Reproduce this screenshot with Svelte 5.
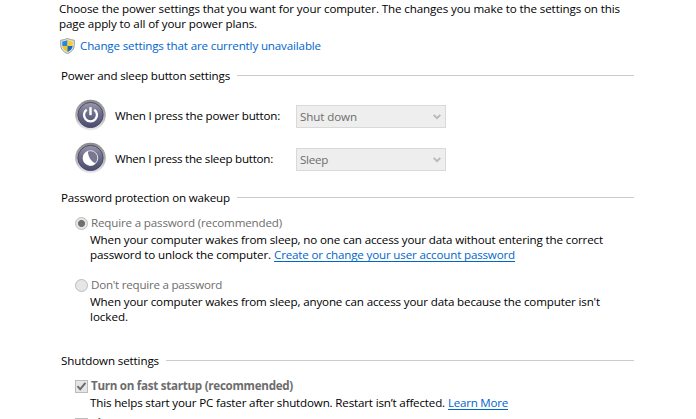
<script>
  // Spreads the letters of a run so that it fills the given width.
  function fit(node, width) {
    const natural = node.getBoundingClientRect().width;
    const count = node.textContent.length;
    node.style.letterSpacing = `${(width - natural) / count}px`;
  }

  const buttons = [
    { kind: 'power', label: 'When I press the power button:', width: 165, value: 'Shut down', valueWidth: 57 },
    { kind: 'sleep', label: 'When I press the sleep button:', width: 158, value: 'Sleep', valueWidth: 28 }
  ];
</script>

{#snippet heading(text, width)}
  <div class="heading">
    <h2><span use:fit={width}>{text}</span></h2>
    <i></i>
  </div>
{/snippet}

<main>
  <div class="intro">
    <p><span use:fit={561}>Choose the power settings that you want for your computer. The changes you make to the settings on this</span></p>
    <p><span use:fit={198}>page apply to all of your power plans.</span></p>
  </div>

  <div class="unlock">
    <svg width="15" height="16" viewBox="0 0 15 16">
      <path d="M7.5 .4Q10.5 2 14.3 2.2V7.5Q14.1 12.8 7.5 15.7Q.9 12.8 .7 7.5V2.2Q4.5 2 7.5 .4Z" fill="#dfe3e4" stroke="#8e9597" stroke-width=".9" />
      <path d="M7.5 2Q5.3 3.2 2.3 3.5V8H7.5Z" fill="#2687dc" />
      <path d="M7.5 2Q9.8 3.2 12.7 3.5V8H7.5Z" fill="#f8ce35" />
      <path d="M2.3 8H7.5V14Q2.8 11.8 2.3 8Z" fill="#f5c51f" />
      <path d="M12.7 8H7.5V14Q12.2 11.8 12.7 8Z" fill="#1767bd" />
    </svg>
    <a href="#unlock"><span use:fit={241}>Change settings that are currently unavailable</span></a>
  </div>

  <section class="buttons">
    {@render heading('Power and sleep button settings', 169)}
    {#each buttons as b}
      <div class="action">
        <svg class="orb" width="32" height="32" viewBox="0 0 32 32">
          <defs>
            <linearGradient id="rim-{b.kind}" x1="0" y1="0" x2="0" y2="1">
              <stop offset="0" stop-color="#8b8b8b" />
              <stop offset=".5" stop-color="#acacae" />
              <stop offset="1" stop-color="#ececef" />
            </linearGradient>
            <linearGradient id="face-{b.kind}" x1="0" y1="0" x2="0" y2="1">
              <stop offset="0" stop-color="#9797ab" />
              <stop offset=".5" stop-color="#696988" />
              <stop offset="1" stop-color="#4b4b70" />
            </linearGradient>
          </defs>
          <circle cx="15.5" cy="16" r="15.3" fill="url(#rim-{b.kind})" />
          <circle cx="15.5" cy="16" r="12.6" fill="url(#face-{b.kind})" stroke="#4c4c6b" stroke-width="1" />
          {#if b.kind === 'power'}
            <path d="M11.7 10.6A6.5 6.5 0 1 0 19.3 10.6" fill="none" stroke="#fff" stroke-width="2.3" />
            <path d="M15.5 8.2V16.2" stroke="#fff" stroke-width="2.4" />
          {:else}
            <circle cx="15.5" cy="16" r="7.3" fill="#77778f" stroke="#e2e2e9" stroke-width="1" />
            <path d="M13 9C12.7 14 16 19.6 20.6 21.4A7.5 7.5 0 1 1 13 9Z" fill="#fff" />
          {/if}
        </svg>
        <div class="label"><span use:fit={b.width}>{b.label}</span></div>
        <div class="select">
          <span use:fit={b.valueWidth}>{b.value}</span>
          <svg width="8" height="6" viewBox="0 0 8 6"><path d="M.7 .8L4 4.1L7.3 .8" fill="none" stroke="#b8b8b8" stroke-width="1.9" /></svg>
        </div>
      </div>
    {/each}
  </section>

  <section class="password">
    {@render heading('Password protection on wakeup', 169)}
    <div class="option">
      <b class="radio on"></b>
      <span use:fit={191}>Require a password (recommended)</span>
    </div>
    <div class="description">
      <p><span use:fit={513}>When your computer wakes from sleep, no one can access your data without entering the correct</span></p>
      <p><span use:fit={181}>password to unlock the computer.</span><a class="underlined" href="#account"><span use:fit={241}>Create or change your user account password</span></a></p>
    </div>
    <div class="option second">
      <b class="radio"></b>
      <span use:fit={131}>Don't require a password</span>
    </div>
    <div class="description">
      <p><span use:fit={510}>When your computer wakes from sleep, anyone can access your data because the computer isn't</span></p>
      <p><span use:fit={38}>locked.</span></p>
    </div>
  </section>

  <section class="shutdown">
    {@render heading('Shutdown settings', 98)}
    <div class="option strong">
      <b class="check"><svg width="11" height="11" viewBox="0 0 11 11"><path d="M1.5 5.2L4.2 8.2L9.4 1.9" fill="none" stroke="#6b6b6b" stroke-width="1.9" /></svg></b>
      <span use:fit={202}>Turn on fast startup (recommended)</span>
    </div>
    <div class="description">
      <p><span use:fit={355}>This helps start your PC faster after shutdown. Restart isn’t affected.</span><a class="underlined" href="#more"><span use:fit={60}>Learn More</span></a></p>
    </div>
    <div class="option strong last">
      <b class="check"></b>
      <span use:fit={32}>Sleep</span>
    </div>
  </section>
</main>

<style>
  :global(body) {
    background: #fff;
    overflow: hidden;
  }

  main {
    box-sizing: border-box;
    width: 696px;
    height: 419px;
    overflow: hidden;
    padding: 1px 62px 0 59px;
    background: #fff;
    color: #000;
    font: 11.6px/15px 'Open Sans', 'Noto Sans', sans-serif;
    white-space: nowrap;
  }

  p,
  h2 {
    margin: 0;
    font: inherit;
  }

  p {
    display: flex;
    gap: 3px;
    height: 15px;
  }

  a {
    color: #0066cc;
    text-decoration: none;
  }

  .underlined {
    height: 14px;
    border-bottom: 1px solid #0066cc;
  }

  .unlock {
    display: flex;
    align-items: center;
    gap: 5px;
    height: 16px;
    margin-top: 7px;
    padding-left: 1px;
  }

  .unlock a {
    height: 16px;
  }

  .heading {
    display: flex;
    align-items: center;
    gap: 7px;
    height: 15px;
    padding-left: 2px;
  }

  .heading i {
    flex: 1;
    height: 1px;
    background: #cbcbcb;
  }

  .buttons {
    margin-top: 14px;
  }

  .action {
    display: flex;
    align-items: center;
    height: 32px;
    margin-top: 11px;
    padding-left: 16px;
  }

  .heading + .action {
    margin-top: 16px;
  }

  .label {
    width: 181px;
    margin-left: 8px;
  }

  .select {
    box-sizing: border-box;
    display: flex;
    align-items: center;
    justify-content: space-between;
    width: 150px;
    height: 23px;
    margin-top: 3px;
    padding: 0 4px 1px 3px;
    border: 1px solid #d9d9d9;
    background: #eee;
    color: #6d6d6d;
  }

  .select svg {
    margin-top: 2px;
  }

  .password {
    margin-top: 16px;
  }

  .option {
    display: flex;
    align-items: center;
    gap: 3px;
    height: 15px;
    margin-top: 10px;
    padding-left: 16px;
    color: #6d6d6d;
  }

  .radio,
  .check {
    box-sizing: border-box;
    flex: none;
    width: 13px;
    height: 13px;
    margin-top: 1px;
    border: 1px solid #bcbcbc;
    background: #e6e6e6;
  }

  .radio {
    border-radius: 50%;
  }

  .radio.on {
    background: radial-gradient(circle, #707070 3.1px, #e6e6e6 3.9px);
  }

  .check svg {
    display: block;
  }

  .description {
    margin-top: 2px;
    padding-left: 31px;
  }

  .option.second {
    margin-top: 15px;
  }

  .shutdown {
    margin-top: 29px;
  }

  .strong {
    font-weight: 700;
  }

  .option.last {
    margin-top: 6px;
  }
</style>
